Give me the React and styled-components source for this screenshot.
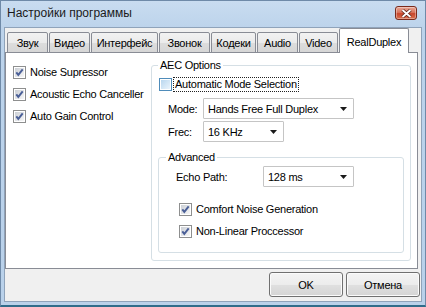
import React from 'react';
import styled, { createGlobalStyle } from 'styled-components';

const GlobalStyle = createGlobalStyle`
  html, body {
    margin: 0;
    padding: 0;
    background: #ffffff;
  }
  body {
    font-family: "Liberation Sans", Arial, sans-serif;
    font-size: 11px;
    letter-spacing: -0.25px;
    color: #000000;
  }
  * {
    box-sizing: border-box;
  }
`;

const Window = styled.div`
  width: 426px;
  height: 307px;
  display: flex;
  flex-direction: column;
  background: linear-gradient(to bottom, #c9dcf0 0, #bcd3eb 28px, #b9d1ea 100%);
  border: 1px solid #6f8aa8;
  border-bottom: 2px solid #2f6c8a;
`;

const TitleBar = styled.div`
  height: 26px;
  flex: none;
  display: flex;
  align-items: center;
  padding: 0 8px 2px 6px;
`;

const Title = styled.div`
  font-size: 12px;
  letter-spacing: 0;
  color: #1a1a1a;
`;

const CloseButton = styled.div`
  margin-left: auto;
  width: 22px;
  height: 14px;
  display: flex;
  align-items: center;
  justify-content: center;
  border: 1px solid #7a2b1c;
  border-radius: 3px;
  background: linear-gradient(to bottom, #e9a896 0%, #d8745d 45%, #c8462c 55%, #d9704f 100%);
  box-shadow: inset 0 0 0 1px rgba(255, 255, 255, 0.35);
`;

const Client = styled.div`
  flex: 1;
  display: flex;
  flex-direction: column;
  margin: 0 3px 3px 3px;
  background: #f0f0f0;
  border: 1px solid #8fa3ba;
`;

const TabStrip = styled.div`
  height: 25px;
  flex: none;
  display: flex;
  align-items: flex-end;
  padding-left: 2px;
  margin-bottom: -1px;
  position: relative;
  z-index: 1;
`;

const Tab = styled.div`
  width: ${p => p.$w}px;
  height: ${p => (p.$active ? 25 : 21)}px;
  margin-left: ${p => (p.$active ? 1 : p.$first ? 0 : 1)}px;
  display: flex;
  align-items: center;
  justify-content: center;
  padding-top: ${p => (p.$active ? 1 : 0)}px;
  font-size: 11px;
  border: 1px solid #898c95;
  border-bottom: ${p => (p.$active ? 'none' : '1px solid #898c95')};
  border-radius: 2px 2px 0 0;
  background: ${p =>
    p.$active
      ? '#ffffff'
      : 'linear-gradient(to bottom, #f2f2f2 0%, #ebebeb 50%, #dddddd 51%, #d6d6d6 100%)'};
`;

const Panel = styled.div`
  height: 217px;
  flex: none;
  margin-right: 3px;
  background: #ffffff;
  border: 1px solid #898c95;
  display: grid;
  grid-template-columns: 145px 1fr;
  padding: 0 6px 7px 0;
`;

const LeftColumn = styled.div`
  display: flex;
  flex-direction: column;
  gap: 9px;
  padding: 13px 0 0 7px;
`;

const CheckRow = styled.div`
  display: flex;
  align-items: center;
  gap: ${p => p.$gap || 3}px;
  height: 13px;
  margin-left: ${p => p.$indent || 0}px;
  margin-top: ${p => p.$top || 0}px;
`;

const CheckLabel = styled.span`
  line-height: 13px;
  padding: 0 1px;
  outline: ${p => (p.$focus ? '1px dotted #222' : 'none')};
  outline-offset: 0;
`;

const Group = styled.fieldset`
  margin: ${p => p.$margin};
  padding: 0;
  min-width: 0;
  border: 1px solid #d5dfe5;
  border-radius: 3px;
  box-shadow: inset 1px 1px 0 #ffffff;
  display: flex;
  flex-direction: column;
  flex: ${p => (p.$grow ? 1 : 'none')};
`;

const Legend = styled.legend`
  margin-left: ${p => p.$offset}px;
  padding: 0 2px;
  line-height: 14px;
  font-size: 11px;
`;

const GroupBody = styled.div`
  flex: 1;
  display: flex;
  flex-direction: column;
  padding: ${p => p.$pad};
`;

const FieldRow = styled.div`
  display: flex;
  align-items: center;
  margin-top: ${p => p.$top || 0}px;
  padding-left: ${p => p.$indent || 0}px;
`;

const FieldLabel = styled.span`
  width: ${p => p.$w}px;
  flex: none;
`;

const Combo = styled.div`
  width: ${p => p.$w}px;
  height: 21px;
  display: flex;
  align-items: center;
  justify-content: space-between;
  padding: 0 6px 0 4px;
  border: 1px solid #c5c5c5;
  border-radius: 1px;
  background: #ffffff;
`;

const ButtonBar = styled.div`
  flex: 1;
  display: flex;
  justify-content: flex-end;
  align-items: flex-start;
  gap: 3px;
  padding: 3px 1px 0 0;
`;

const Button = styled.div`
  width: 74px;
  height: 25px;
  display: flex;
  align-items: center;
  justify-content: center;
  border: 1px solid #707070;
  border-radius: 3px;
  background: linear-gradient(to bottom, #f4f4f4 0%, #ececec 50%, #e0e0e0 51%, #d4d4d4 100%);
  box-shadow: inset 0 0 0 1px #fbfbfb;
  font-size: 11px;
`;

const BoxSvg = styled.svg`
  flex: none;
  display: block;
`;

function CheckBox({ checked, hot }) {
  const id = hot ? 'cb-hot' : 'cb-norm';
  return (
    <BoxSvg width="13" height="13" viewBox="0 0 13 13">
      <defs>
        <linearGradient id={id} x1="0" y1="0" x2="1" y2="1">
          {hot ? (
            <>
              <stop offset="0" stopColor="#b9d7ef" />
              <stop offset="1" stopColor="#eaf4fc" />
            </>
          ) : (
            <>
              <stop offset="0" stopColor="#cbcfd5" />
              <stop offset="1" stopColor="#f7f7f7" />
            </>
          )}
        </linearGradient>
      </defs>
      <rect x="0.5" y="0.5" width="12" height="12" fill="#ffffff" stroke={hot ? '#4f8cba' : '#8e8f8f'} />
      <rect x="2" y="2" width="9" height="9" fill={`url(#${id})`} />
      {checked && (
        <path d="M3.3 6.3 L5.3 8.9 L9.7 3.3" fill="none" stroke="#4a5f97" strokeWidth="1.9" />
      )}
    </BoxSvg>
  );
}

function Arrow() {
  return (
    <BoxSvg width="7" height="4" viewBox="0 0 7 4">
      <path d="M0 0 H7 L3.5 4 Z" fill="#1a1a1a" />
    </BoxSvg>
  );
}

function CloseGlyph() {
  return (
    <BoxSvg width="11" height="9" viewBox="0 0 11 9">
      <path d="M1.5 1 L9.5 8 M9.5 1 L1.5 8" stroke="#5a2418" strokeWidth="3.4" />
      <path d="M1.5 1 L9.5 8 M9.5 1 L1.5 8" stroke="#ffffff" strokeWidth="1.8" />
    </BoxSvg>
  );
}

const tabs = [
  { name: 'Звук', w: 41 },
  { name: 'Видео', w: 41 },
  { name: 'Интерфейс', w: 67 },
  { name: 'Звонок', w: 51 },
  { name: 'Кодеки', w: 45 },
  { name: 'Audio', w: 41 },
  { name: 'Video', w: 39 },
  { name: 'RealDuplex', w: 70, active: true },
];

const mainOptions = ['Noise Supressor', 'Acoustic Echo Canceller', 'Auto Gain Control'];

export default function App() {
  return (
    <>
      <GlobalStyle />
      <Window>
        <TitleBar>
          <Title>Настройки программы</Title>
          <CloseButton>
            <CloseGlyph />
          </CloseButton>
        </TitleBar>
        <Client>
          <TabStrip>
            {tabs.map((t, i) => (
              <Tab key={t.name} $w={t.w} $active={t.active} $first={i === 0}>
                {t.name}
              </Tab>
            ))}
          </TabStrip>
          <Panel>
            <LeftColumn>
              {mainOptions.map(label => (
                <CheckRow key={label}>
                  <CheckBox checked />
                  <CheckLabel>{label}</CheckLabel>
                </CheckRow>
              ))}
            </LeftColumn>

            <Group $margin="5px 0 0 0">
              <Legend $offset={6}>AEC Options</Legend>
              <GroupBody $pad="6px 6px 7px 6px">
                <CheckRow $indent={1} $gap={2}>
                  <CheckBox hot />
                  <CheckLabel $focus>Automatic Mode Selection</CheckLabel>
                </CheckRow>
                <FieldRow $top={7} $indent={10}>
                  <FieldLabel $w={35}>Mode:</FieldLabel>
                  <Combo $w={151}>
                    <span>Hands Free Full Duplex</span>
                    <Arrow />
                  </Combo>
                </FieldRow>
                <FieldRow $top={2} $indent={10}>
                  <FieldLabel $w={35}>Frec:</FieldLabel>
                  <Combo $w={81}>
                    <span>16 KHz</span>
                    <Arrow />
                  </Combo>
                </FieldRow>

                <Group $margin="8px 0 0 0" $grow>
                  <Legend $offset={7}>Advanced</Legend>
                  <GroupBody $pad="2px 0 0 17px">
                    <FieldRow>
                      <FieldLabel $w={87}>Echo Path:</FieldLabel>
                      <Combo $w={91}>
                        <span>128 ms</span>
                        <Arrow />
                      </Combo>
                    </FieldRow>
                    <CheckRow $indent={3} $top={16}>
                      <CheckBox checked />
                      <CheckLabel>Comfort Noise Generation</CheckLabel>
                    </CheckRow>
                    <CheckRow $indent={3} $top={9}>
                      <CheckBox checked />
                      <CheckLabel>Non-Linear Proccessor</CheckLabel>
                    </CheckRow>
                  </GroupBody>
                </Group>
              </GroupBody>
            </Group>
          </Panel>
          <ButtonBar>
            <Button>OK</Button>
            <Button>Отмена</Button>
          </ButtonBar>
        </Client>
      </Window>
    </>
  );
}
